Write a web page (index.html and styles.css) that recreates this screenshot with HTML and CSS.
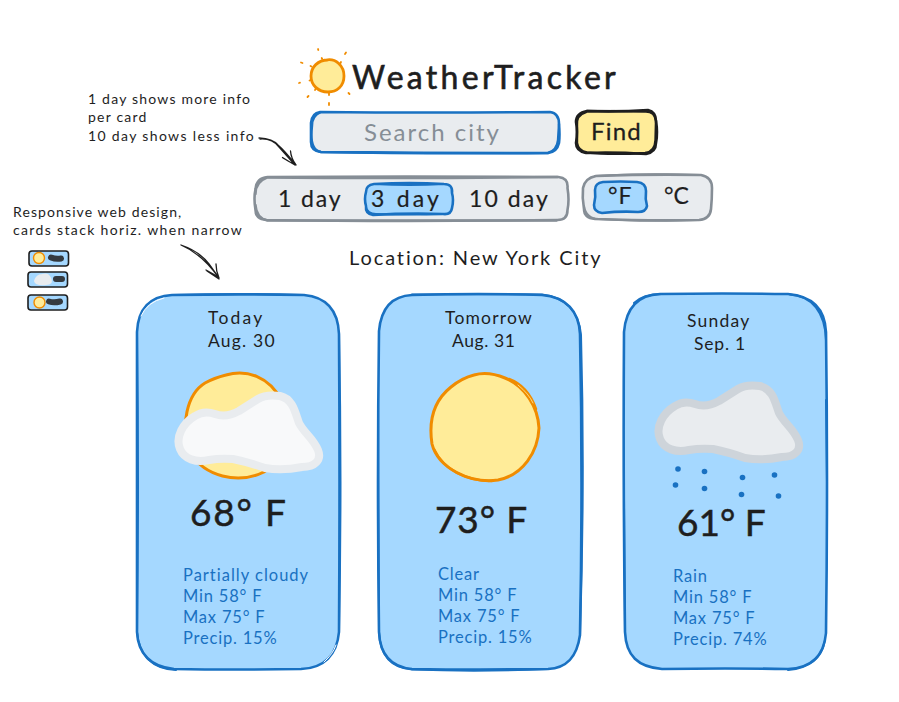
FILE: index.html
```html
<!DOCTYPE html>
<html lang="en">
<head>
<meta charset="utf-8">
<title>WeatherTracker</title>
<link rel="stylesheet" href="styles.css">
</head>
<body>
<div class="board">
  <main class="app">
    <header class="brand">
      <svg class="brand-sun" viewBox="296 44 54 64" width="54" height="64">
        <path d="M326 60 C336 58 344 66 344 76 C344 86 337 92 328 92 C318 92 311 85 311 76 C311 67 318 60 328 60" class="sun thick"/>
        <path class="rays" d="M318 49l.3 1M346 52.500l-1 1.500M301 62.500l1.500 .5M299 83l1-.3M307.500 97l1-1M329 103v2M348.500 93l1 1M321.700 58l.5 1M341 62l-.5 1M310.500 66l1 .5M309.500 80.500l1-.3M315 90l.6-1M329 93v2"/>
      </svg>
      <h1>WeatherTracker</h1>
    </header>

    <div class="search">
      <div class="field">
        <svg class="frame" viewBox="309 110 252 46"><path class="blue on-grey w25" d="M320 112 Q430 113 550 112 Q559 113 559 124 Q560 135 559 143 Q557 152 548 153 Q430 153 321 152 Q311 151 311 142 L311 123 Q312 113 320 112Z"/><path class="blue line" d="M320 112.500 Q312 116 312 126 Q309 150 321 152 Q420 154 548 153 Q557 150 558 140 L559 124"/></svg>
        <span class="placeholder">Search city</span>
      </div>
      <div class="find">
        <svg class="frame" viewBox="574 109 85 47"><path class="ink on-yellow w25" d="M587 111 Q620 112 648 110 Q656 112 656 121 Q658 133 656 143 Q656 152 646 154 Q615 152 586 153 Q576 151 576 143 Q578 132 576 122 Q576 113 587 111Z"/><path class="ink line" d="M586 112 Q576 115 577 125 L577 143 Q578 151 587 152.500 Q610 155 645 153 Q655 152 655.500 140 L656 121 Q655 111 645 111.500 Q620 111 587 111"/></svg>
        <span>Find</span>
      </div>
    </div>

    <div class="filters">
      <div class="days">
        <svg class="frame" viewBox="253 175 316 47"><path class="grey on-grey w25" d="M267 177 Q400 176 558 177 Q568 178 567 188 Q569 200 567 210 Q567 220 557 220 Q400 222 266 220 Q255 219 255 210 Q253 198 255 189 Q256 178 267 177Z"/><path class="grey line" d="M267 177.500 Q400 179 557 177 M267 177.500 Q255 182 255 194 M255 205 Q256 218 267 220.500 L556 220.500"/></svg>
        <span class="tab one">1 day</span>
        <span class="tab three">
          <svg class="frame" viewBox="364 182 91 35"><path class="blue on-sky w25" d="M374 184 Q410 182 444 184 Q453 184 452 193 Q454 200 452 208 Q451 215 443 214 Q405 213 373 215 Q365 214 366 206 Q364 199 366 192 Q366 185 374 184Z"/><path class="blue thin" d="M374 184 Q410 186 444 184 M366 207 Q367 214 376 214 Q410 215 443 214"/></svg>
          3 day</span>
        <span class="tab ten">10 day</span>
      </div>
      <div class="units">
        <svg class="frame" viewBox="580 173 133 49"><path class="grey on-grey w25" d="M595 176 Q650 174 700 175 Q711 177 711 188 Q711 199 710 209 Q709 219 698 220 Q650 221 594 219 Q583 218 583 209 Q581 198 582 188 Q584 178 595 176Z"/><path class="grey thin" d="M594 176 Q640 173 699 175 M583 206 Q585 219 598 219 Q640 222 697 220"/></svg>
        <span class="unit f">
          <svg class="frame" viewBox="591 180 56 35"><path class="blue on-sky w25" d="M602 182 Q620 181 636 182 Q645 183 645 191 Q644 199 646 206 Q645 212 637 212 Q620 211 601 213 Q593 212 593 205 Q595 197 594 190 Q594 183 602 182Z"/></svg>
          °F</span>
        <span class="unit c">°C</span>
      </div>
    </div>

    <p class="location">Location: New York City</p>

    <section class="cards">
      <article class="card today">
        <svg class="frame" viewBox="136 293 205 378">
          <path class="blue on-sky w25" d="M172 295 Q240 294 304 295 C326 297 338 310 339 334 Q340 480 339 632 C337 655 324 668 301 669 Q235 670 174 669 C151 667 138 654 137 632 L137 332 C138 309 150 296 172 295Z"/>
          <path class="blue thin" d="M172 295 Q238 293 304 295 M339 334 Q342 480 339 632 M137 335 Q139 480 137 632 C139 655 152 669 176 670"/>
          <path class="glint" d="M141 316 Q147 302 164 298 M324 662 Q333 654 336 645"/>
        </svg>
        <h2><span>Today</span><span>Aug. 30</span></h2>
        <svg class="art" viewBox="136 351 205 135">
          <path class="sun w3" d="M226 375 C246 369 269 376 282 401 C294 431 289 457 264 472 C237 485 205 476 190 453 C180 425 187 394 205 383 Q214 378 226 375"/>
          <path class="cloud light" d="M195 416 Q204 410 215 414 Q226 418 239 411 L258 399 Q266 394 280 396 C293 399 295 412 299 423 C304 433 313 438 318 450 C322 460 315 467 302 467 Q282 471 265 468 Q248 462 233 459 Q220 458 209 460 C196 463 184 459 180 449 C175 437 183 423 195 416Z"/>
        </svg>
        <p class="temp">68° F</p>
        <ul><li class="wide">Partially cloudy</li><li>Min 58° F</li><li>Max 75° F</li><li>Precip. 15%</li></ul>
      </article>

      <article class="card tomorrow">
        <svg class="frame" viewBox="377 293 206 378">
          <path class="blue on-sky w25" d="M412 295 Q480 293 542 295 C566 297 579 311 580 334 Q583 480 580 635 C577 657 567 668 548 669 Q480 670 412 669 C391 667 380 655 379 632 Q377 480 379 331 C381 309 391 296 412 295Z"/>
          <path class="blue thin" d="M412 294.500 Q476 294 542 294.500 C566 297 579 312 581 335 Q585 480 580 635 M378 400 L379 632 C380 655 391 668 412 669.500 Q480 672 548 669"/>
        </svg>
        <h2><span>Tomorrow</span><span>Aug. 31</span></h2>
        <svg class="art" viewBox="377 351 206 142">
          <path class="sun w3" d="M474 375 Q488 371 505 378 C525 386 538 407 539 428 C538 452 523 475 498 480 C470 484 438 468 432 444 C428 418 436 399 451 387 Q462 378 474 375"/>
          <path class="orange" d="M509 379 Q528 386 536 409 M434 449 C444 470 466 481 492 481"/>
          <path class="ray-gap" d="M518 385 Q529 394 533 403"/>
        </svg>
        <p class="temp">73° F</p>
        <ul><li>Clear</li><li>Min 58° F</li><li>Max 75° F</li><li>Precip. 15%</li></ul>
      </article>

      <article class="card sunday">
        <svg class="frame" viewBox="623 293 205 378">
          <path class="blue on-sky w25" d="M660 294 Q720 293 788 294 C812 296 825 309 826 332 Q828 480 826 633 C824 656 811 668 788 669 Q725 668 662 669 C638 667 626 656 625 632 Q623 480 624 332 C626 308 638 295 660 294Z"/>
          <path class="blue thin" d="M634 303 C641 296 650 294 662 294 M790 294.500 C812 296 825 312 826 340 M826 400 L827 480 M624 500 L625 632 M825 640 C822 658 810 668 788 670"/>
        </svg>
        <h2><span>Sunday</span><span>Sep. 1</span></h2>
        <svg class="art" viewBox="623 353 205 143">
          <path class="cloud dark" d="M675 406 Q684 400 695 404 Q706 408 719 401 L738 389 Q746 384 760 386 C773 389 775 402 779 413 C784 423 793 428 798 440 C802 450 795 457 782 457 Q762 461 745 458 Q728 452 713 449 Q700 448 689 450 C676 453 664 449 660 439 C655 427 663 413 675 406Z"/>
          <g class="rain"><circle cx="678" cy="469" r="2.8"/><circle cx="704.500" cy="471.500" r="2.800"/><circle cx="742.500" cy="477.500" r="2.800"/><circle cx="774.500" cy="475" r="2.800"/><circle cx="675.500" cy="485" r="2.800"/><circle cx="704.500" cy="488.500" r="2.800"/><circle cx="741.500" cy="494.500" r="2.800"/><circle cx="778.500" cy="496" r="2.800"/></g>
        </svg>
        <p class="temp">61° F</p>
        <ul><li>Rain</li><li>Min 58° F</li><li>Max 75° F</li><li>Precip. 74%</li></ul>
      </article>
    </section>
  </main>

  <aside class="note note-info"><span>1 day shows more info</span><span>per card</span><span class="last">10 day shows less info</span></aside>
  <aside class="note note-layout"><span>Responsive web design,</span><span class="last">cards stack horiz. when narrow</span></aside>
  <svg class="arrow arrow-info" viewBox="255 134 46 36"><path d="M259 138 Q273 139 278 145 Q285 151 295 164 M260 139 Q272 138 279 147 L295 165 M282.500 157.500 Q289 162 296 165 Q291 158 290.500 151 M283 158 L295 165"/></svg>
  <svg class="arrow arrow-layout" viewBox="177 241 48 42"><path d="M181 245 Q202 254 219 278 M181 245 Q199 251 209 264 L219 278 M206 270 Q214 274 219 278 Q216 271 216 264 M207 271 L219 279"/></svg>
  <svg class="mini" viewBox="24 246 50 68">
    <g class="mini-card"><rect x="29" y="251" width="39.500" height="15" rx="3"/><rect x="28" y="272" width="39.500" height="15" rx="3"/><rect x="28" y="295" width="39.500" height="15" rx="3"/></g>
    <circle class="sun w1" cx="39" cy="258" r="5.500"/><circle class="sun w1" cx="39.500" cy="302.500" r="5.500"/>
    <path class="mini-cloud" d="M35 281 Q37 275 42 275 Q48 273 50 278 Q53 284 46 284 Q36 285 35 281Z"/>
    <path class="scribble" d="M51 257.500 Q56 259.500 61 258.500 M56 279 L62 279 M49 301.500 Q54 303 60 301.500"/>
  </svg>
</div>
</body>
</html>
```
FILE: styles.css
```css
* { box-sizing: border-box; }
body { margin: 0; background: #fff; }
h1, h2, p, ul { margin: 0; padding: 0; font-weight: 400; }
ul { list-style: none; }
svg { display: block; overflow: visible; fill: none; stroke-linecap: round; stroke-linejoin: round; }

.board {
  position: relative;
  width: 899px;
  height: 702px;
  overflow: hidden;
  font-family: Lato, "Open Sans", sans-serif;
  color: #1e1e1e;
  white-space: nowrap;
}
.app { display: flex; flex-direction: column; padding-top: 44px; }

.frame { position: absolute; inset: 0; width: 100%; height: 100%; z-index: -1; }
.field, .find, .days, .units, .three, .f, .card { position: relative; z-index: 0; }

.blue { stroke: #1971c2; }
.grey { stroke: #868e96; }
.ink { stroke: #1e1e1e; }
.on-grey { fill: #e9ecef; }
.on-yellow { fill: #ffec99; }
.on-sky { fill: #a5d8ff; }
.w25 { stroke-width: 2.6; }
.line { stroke-width: 2.4; }
.thin { stroke-width: 2; }
.glint { stroke: #fff; stroke-width: 1; }
.sun { fill: #ffec99; stroke: #f08c00; stroke-width: 3; }
.thick { stroke-width: 2.8; }
.w1 { stroke-width: 1.4; }
.orange { stroke: #f08c00; stroke-width: 2.4; }
.ray-gap { stroke: #ffec99; stroke-width: 0.8; }
.rays { stroke: #f08c00; stroke-width: 1.8; }
.cloud { stroke-width: 8; }
.light { fill: #f8f9fa; stroke: #e9ecef; }
.dark { fill: #e9ecef; stroke: #ced4da; }
.rain { fill: #1971c2; }

.brand { display: flex; height: 64px; margin-left: 296px; }
.brand-sun { flex: none; }
h1 { margin-left: 2px; padding-top: 9px; font-size: 32px; line-height: 48px; letter-spacing: 3.3px; -webkit-text-stroke: 0.6px currentColor; }

.search { display: flex; gap: 13px; align-items: flex-start; margin: 2px 0 0 309px; font-size: 24px; }
.field { width: 252px; height: 46px; padding-left: 55px; line-height: 44px; }
.placeholder { color: #868e96; letter-spacing: 2px; }
.find { width: 85px; height: 47px; margin-top: -1px; padding-left: 17px; line-height: 43px; letter-spacing: 1.2px; -webkit-text-stroke: 0.3px currentColor; }

.filters { display: flex; gap: 11px; margin: 17px 0 0 253px; font-size: 23px; line-height: 33px; -webkit-text-stroke: 0.2px currentColor; }
.days { display: flex; width: 317px; height: 47px; margin-top: 2px; padding-top: 7px; }
.tab { letter-spacing: 1.9px; height: 35px; line-height: 33px; }
.three { letter-spacing: 3.2px; }
.one { width: 111px; padding-left: 25px; }
.three { width: 91px; padding-left: 7px; }
.ten { padding-left: 14px; letter-spacing: 2.1px; }
.units { display: flex; width: 133px; height: 49px; padding: 7px 0 0 11px; }
.unit { height: 35px; line-height: 31px; letter-spacing: 1px; }
.f { width: 56px; padding-left: 16px; }
.c { padding-left: 16px; letter-spacing: 0; }

.location { margin: 21px 0 0 349px; font-size: 20px; line-height: 28px; letter-spacing: 1.9px; }

.cards { display: flex; margin: 22px 0 0 136px; }
.card { width: 205px; height: 378px; padding-top: 12px; }
.tomorrow { width: 206px; margin-left: 36px; }
.sunday { margin-left: 40px; padding-top: 14px; }
h2 { display: flex; flex-direction: column; height: 46px; padding-top: 1px; font-size: 17.5px; line-height: 23px; letter-spacing: 1.2px; }
.today h2 { padding-left: 72px; }
.today h2 span:first-child { letter-spacing: 2.2px; }
.tomorrow h2 { padding-left: 68px; }
.tomorrow h2 span + span { padding-left: 7px; letter-spacing: 0.6px; }
.sunday h2 { padding-top: 2px; padding-left: 64px; }
.sunday h2 span + span { padding-left: 7px; letter-spacing: 0.8px; }
.art { width: 100%; height: 135px; }
.tomorrow .art { height: 142px; }
.sunday .art { height: 143px; }
.temp { height: 48px; padding-top: 1px; font-size: 37px; line-height: 50px; letter-spacing: 1.8px; -webkit-text-stroke: 0.5px currentColor; }
.today .temp { padding-left: 54px; }
.tomorrow .temp { padding-left: 58px; letter-spacing: 0.9px; }
.sunday .temp { padding-left: 54px; letter-spacing: 0; }
.card ul { color: #1971c2; font-size: 16.5px; line-height: 21px; letter-spacing: 0.8px; }
.wide { letter-spacing: 1px; }
.today ul { padding: 31px 0 0 47px; }
.tomorrow ul { padding: 23px 0 0 61px; }
.sunday ul { padding: 22px 0 0 50px; }

.note { position: absolute; display: flex; flex-direction: column; font-size: 14px; line-height: 18.3px; letter-spacing: 1.2px; }
.last { letter-spacing: 1.35px; }
.note-info { left: 88px; top: 90px; }
.note-layout { left: 13px; top: 203px; letter-spacing: 1.1px; }
.arrow { position: absolute; stroke: #1e1e1e; stroke-width: 1.3; }
.arrow-info { left: 255px; top: 134px; width: 46px; height: 36px; }
.arrow-layout { left: 177px; top: 241px; width: 48px; height: 42px; }
.mini { position: absolute; left: 24px; top: 246px; width: 50px; height: 68px; }
.mini-card { fill: #a5d8ff; stroke: #1e1e1e; stroke-width: 1.6; }
.mini-cloud { fill: #e9ecef; stroke: #e9ecef; stroke-width: 2; }
.scribble { stroke: #343a40; stroke-width: 6; }
```
